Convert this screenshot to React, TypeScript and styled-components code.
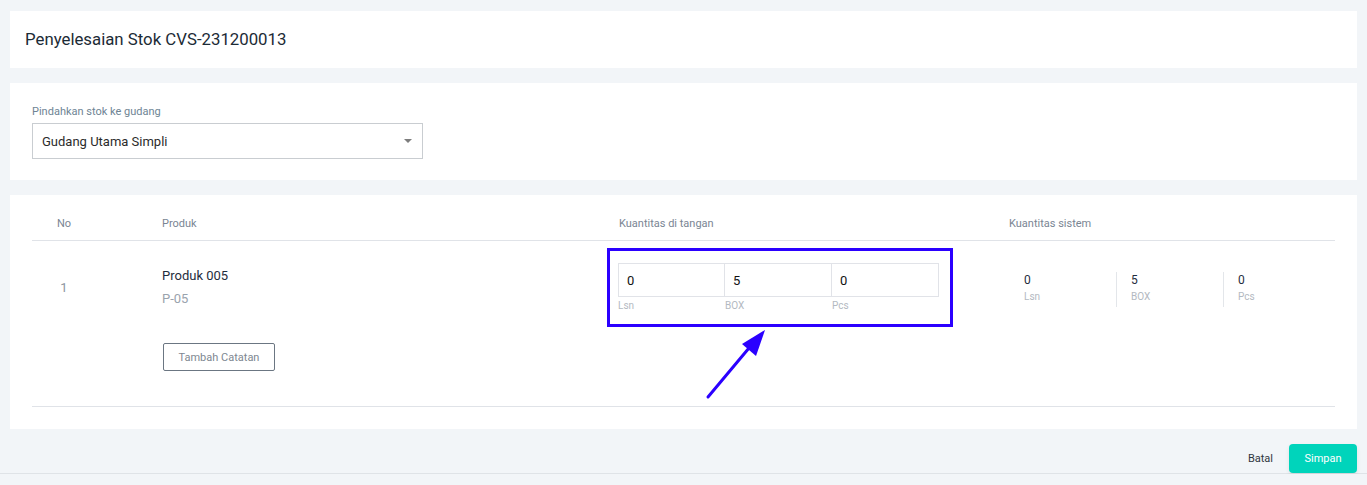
import styled, { createGlobalStyle } from "styled-components";

const GlobalStyle = createGlobalStyle`
  html, body {
    margin: 0;
    padding: 0;
    background: #f2f5f8;
    font-family: Roboto, "Noto Sans", sans-serif;
    color: #1f2d3d;
  }
  * { box-sizing: border-box; }
`;

const Page = styled.div`
  padding: 11px 10px 0 10px;
  display: flex;
  flex-direction: column;
  gap: 15px;
`;

const Card = styled.div<{ $pad?: string }>`
  background: #fff;
  padding: ${(p) => p.$pad || "0"};
`;

const Title = styled.h1`
  margin: 0;
  font-size: 16.8px;
  font-weight: 400;
  line-height: 57px;
  padding-left: 15px;
  color: #1c2b36;
`;

const Label = styled.label`
  display: block;
  font-size: 11px;
  color: #6e8494;
  margin-bottom: 4px;
  line-height: 14px;
`;

const Select = styled.div`
  width: 391px;
  height: 36px;
  border: 1px solid #c9cdd1;
  display: flex;
  align-items: center;
  justify-content: space-between;
  padding: 0 10px 0 9px;
  font-size: 13px;
  color: #2b2b2b;
`;

const Caret = styled.span`
  width: 0;
  height: 0;
  border-left: 4px solid transparent;
  border-right: 4px solid transparent;
  border-top: 4px solid #7d7d7d;
`;

const Table = styled.div`
  margin: 0 22px;
  border-bottom: 1px solid #e0e3e8;
`;

const Row = styled.div<{ $head?: boolean }>`
  display: grid;
  grid-template-columns: 64px 511px 402px 1fr;
  border-bottom: ${(p) => (p.$head ? "1px solid #e0e3e8" : "none")};
  height: ${(p) => (p.$head ? "46px" : "auto")};
  align-items: start;
`;

const HeadCell = styled.div<{ $center?: boolean; $pl?: number }>`
  font-size: 11px;
  line-height: 14px;
  color: #7a8593;
  text-align: ${(p) => (p.$center ? "center" : "left")};
  padding-left: ${(p) => p.$pl || 0}px;
  padding-top: 22px;
`;

const NoCell = styled.div`
  text-align: center;
  font-size: 13px;
  line-height: 16px;
  color: #8d959e;
  padding-top: 39px;
`;

const ProductCell = styled.div`
  padding-left: 66px;
  padding-top: 27px;
  padding-bottom: 35px;
`;

const ProdName = styled.div`
  font-size: 13px;
  color: #1f2d3d;
  line-height: 16px;
`;

const ProdCode = styled.div`
  font-size: 13px;
  color: #9aa3ad;
  line-height: 16px;
  margin-top: 7px;
`;

const NoteButton = styled.button`
  margin: 36px 0 0 1px;
  width: 112px;
  height: 28px;
  background: #fff;
  border: 1px solid #6b7682;
  border-radius: 2px;
  font-family: inherit;
  font-size: 11px;
  color: #7e8791;
`;

const QtyCell = styled.div`
  padding-top: 7px;
  position: relative;
`;

const Highlight = styled.div`
  width: 346px;
  height: 79px;
  border: 3px solid #2b00ff;
  padding: 12px 0 0 8px;
  display: flex;
`;

const Field = styled.div`
  width: 107px;
  display: flex;
  flex-direction: column;
`;

const Input = styled.div<{ $first?: boolean }>`
  height: 34px;
  border: 1px solid #e1e3e8;
  border-left: ${(p) => (p.$first ? "1px solid #e1e3e8" : "none")};
  font-size: 13px;
  color: #111;
  display: flex;
  align-items: center;
  padding-left: 8px;
`;

const Unit = styled.div`
  font-size: 10px;
  color: #b3b9c1;
  line-height: 15px;
  margin-top: 1px;
`;

const Arrow = styled.svg`
  position: absolute;
  left: 94px;
  top: 82px;
`;

const SystemCell = styled.div`
  padding-top: 31px;
  display: flex;
`;

const SysItem = styled.div<{ $first?: boolean }>`
  width: 107px;
  padding-left: ${(p) => (p.$first ? 15 : 14)}px;
  border-left: ${(p) => (p.$first ? "none" : "1px solid #e3e6ea")};
  height: 35px;
`;

const SysValue = styled.div`
  font-size: 12px;
  color: #1f2d3d;
  line-height: 16px;
`;

const SysUnit = styled.div`
  font-size: 10px;
  color: #b3b9c1;
  line-height: 14px;
  margin-top: 2px;
`;

const Footer = styled.div`
  height: 45px;
  border-bottom: 1px solid #dfe3e7;
  display: flex;
  justify-content: flex-end;
  align-items: flex-start;
  padding-right: 10px;
  gap: 16px;
`;

const Cancel = styled.button`
  background: none;
  border: none;
  font-family: inherit;
  font-size: 11px;
  color: #2f3640;
  height: 29px;
  padding: 0;
  margin-top: 15px;
`;

const Save = styled.button`
  background: #00d4bb;
  border: none;
  border-radius: 4px;
  color: #fff;
  font-family: inherit;
  font-size: 11px;
  width: 68px;
  height: 29px;
  margin-top: 15px;
  box-shadow: 0 2px 4px rgba(0, 0, 0, 0.08);
`;

const units = ["Lsn", "BOX", "Pcs"];
const onHand = ["0", "5", "0"];
const system = ["0", "5", "0"];

export default function App() {
  return (
    <>
      <GlobalStyle />
      <Page>
        <Card>
          <Title>Penyelesaian Stok CVS-231200013</Title>
        </Card>
        <Card $pad="22px 22px 21px 22px">
          <Label>Pindahkan stok ke gudang</Label>
          <Select>
            <span>Gudang Utama Simpli</span>
            <Caret />
          </Select>
        </Card>
        <Card $pad="0 0 22px 0">
          <Table>
            <Row $head>
              <HeadCell $center>No</HeadCell>
              <HeadCell $pl={66}>Produk</HeadCell>
              <HeadCell $pl={12}>Kuantitas di tangan</HeadCell>
              <HeadCell>Kuantitas sistem</HeadCell>
            </Row>
            <Row>
              <NoCell>1</NoCell>
              <ProductCell>
                <ProdName>Produk 005</ProdName>
                <ProdCode>P-05</ProdCode>
                <NoteButton>Tambah Catatan</NoteButton>
              </ProductCell>
              <QtyCell>
                <Highlight>
                  {units.map((u, i) => (
                    <Field key={u}>
                      <Input $first={i === 0}>{onHand[i]}</Input>
                      <Unit>{u}</Unit>
                    </Field>
                  ))}
                </Highlight>
                <Arrow width="70" height="80" viewBox="0 0 70 80">
                  <line x1="7" y1="74" x2="48" y2="25" stroke="#2b00ff" strokeWidth="3" strokeLinecap="round" />
                  <polygon points="64,7 41,21 55,33" fill="#2b00ff" />
                </Arrow>
              </QtyCell>
              <SystemCell>
                {units.map((u, i) => (
                  <SysItem key={u} $first={i === 0}>
                    <SysValue>{system[i]}</SysValue>
                    <SysUnit>{u}</SysUnit>
                  </SysItem>
                ))}
              </SystemCell>
            </Row>
          </Table>
        </Card>
      </Page>
      <Footer>
        <Cancel>Batal</Cancel>
        <Save>Simpan</Save>
      </Footer>
    </>
  );
}
